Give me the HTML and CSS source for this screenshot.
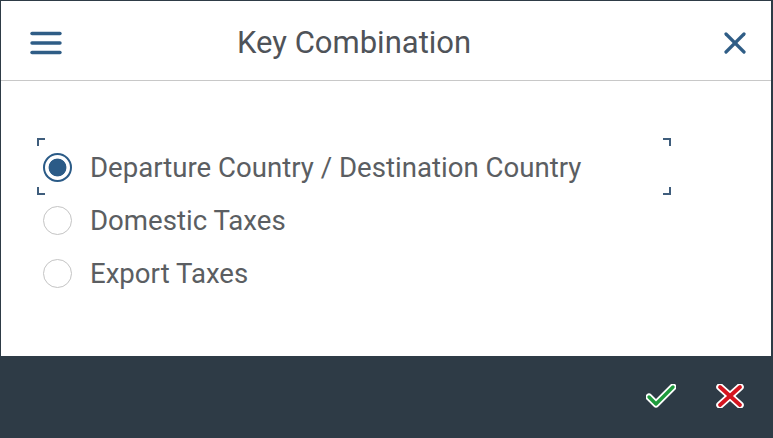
FILE: index.html
```html
<!DOCTYPE html>
<html>
<head>
<meta charset="utf-8">
<link rel="stylesheet" href="styles.css">
</head>
<body>
<div class="dialog">
  <header class="header">
    <span class="menu-icon" aria-label="Menu">
      <svg width="32" height="24" viewBox="0 0 32 24"><g stroke="#2f5d86" stroke-width="3.4" stroke-linecap="round"><line x1="2" y1="2.5" x2="30" y2="2.5"/><line x1="2" y1="12" x2="30" y2="12"/><line x1="2" y1="21.5" x2="30" y2="21.5"/></g></svg>
    </span>
    <h1 class="title">Key Combination</h1>
    <span class="close-icon" aria-label="Close">
      <svg width="22" height="22" viewBox="0 0 22 22"><g stroke="#2f5d86" stroke-width="3.2" stroke-linecap="round"><line x1="2" y1="2" x2="20" y2="20"/><line x1="20" y1="2" x2="2" y2="20"/></g></svg>
    </span>
  </header>
  <main class="content">
    <div class="options">
      <div class="option focused">
        <span class="corner tl"></span><span class="corner tr"></span><span class="corner bl"></span><span class="corner br"></span>
        <span class="radio checked"></span>
        <span class="label">Departure Country / Destination Country</span>
      </div>
      <div class="option">
        <span class="radio"></span>
        <span class="label">Domestic Taxes</span>
      </div>
      <div class="option">
        <span class="radio"></span>
        <span class="label">Export Taxes</span>
      </div>
    </div>
  </main>
  <footer class="footer">
    <span class="action" aria-label="OK">
      <svg width="30" height="24" viewBox="0 0 30 24"><polyline points="3,13 10,20 27,3" fill="none" stroke="#fff" stroke-width="7" stroke-linecap="round" stroke-linejoin="round"/><polyline points="3,13 10,20 27,3" fill="none" stroke="#1e9a3c" stroke-width="3.4" stroke-linecap="round" stroke-linejoin="round"/></svg>
    </span>
    <span class="action" aria-label="Cancel">
      <svg width="28" height="24" viewBox="0 0 28 24"><g fill="none" stroke="#fff" stroke-width="7.5" stroke-linecap="round"><line x1="4" y1="3" x2="24" y2="21"/><line x1="24" y1="3" x2="4" y2="21"/></g><g fill="none" stroke="#d4141e" stroke-width="3.8" stroke-linecap="round"><line x1="4" y1="3" x2="24" y2="21"/><line x1="24" y1="3" x2="4" y2="21"/></g></svg>
    </span>
  </footer>
</div>
</body>
</html>
```
FILE: styles.css
```css
* { box-sizing: border-box; }
html, body { margin: 0; padding: 0; }
body {
  width: 773px;
  height: 438px;
  overflow: hidden;
  font-family: Roboto, "Liberation Sans", Arial, sans-serif;
  background: #fff;
}
.dialog {
  width: 773px;
  height: 438px;
  display: flex;
  flex-direction: column;
  border-top: 1px solid #2e3b46;
  border-left: 1px solid #2e3b46;
  border-right: 2px solid #2e3b46;
  background: #fff;
}
.header {
  height: 80px;
  flex: none;
  display: flex;
  align-items: center;
  padding: 4px 25px 0 29px;
  border-bottom: 1px solid #c8c8c8;
}
.menu-icon { display: flex; width: 32px; height: 24px; }
.title {
  margin: 0 0 0 175px;
  font-size: 31px;
  line-height: 36px;
  font-weight: 400;
  color: #4f5359;
}
.close-icon { display: flex; margin-left: auto; }
.content {
  flex: 1;
  padding: 60px 0 0 36px;
}
.options { display: flex; flex-direction: column; }
.option {
  position: relative;
  display: flex;
  align-items: center;
  height: 53px;
  width: 634px;
  padding-left: 6px;
}
.radio {
  width: 29px;
  height: 29px;
  border-radius: 50%;
  border: 1.5px solid #c4c4c4;
  background: #fff;
  flex: none;
  margin-right: 18px;
}
.radio.checked {
  border: 2px solid #2b5b87;
  background: radial-gradient(circle, #2b5b87 0 8.5px, #fff 9.3px);
}
.label {
  font-size: 27.6px;
  line-height: 34px;
  color: #5b5e62;
}
.corner {
  position: absolute;
  width: 8px;
  height: 8px;
  border-color: #3f5d7c;
  border-style: solid;
  border-width: 0;
}
.corner.tl { top: -3px; left: 0; border-top-width: 2px; border-left-width: 2px; }
.corner.tr { top: -3px; right: 0; border-top-width: 2px; border-right-width: 2px; }
.corner.bl { bottom: -1px; left: 0; border-bottom-width: 2px; border-left-width: 2px; }
.corner.br { bottom: -1px; right: 0; border-bottom-width: 2px; border-right-width: 2px; }
.footer {
  height: 82px;
  flex: none;
  background: #2e3b46;
  display: flex;
  align-items: center;
  justify-content: flex-end;
  gap: 40px;
  padding: 0 27px 2px 0;
}
.action { display: flex; }
```
